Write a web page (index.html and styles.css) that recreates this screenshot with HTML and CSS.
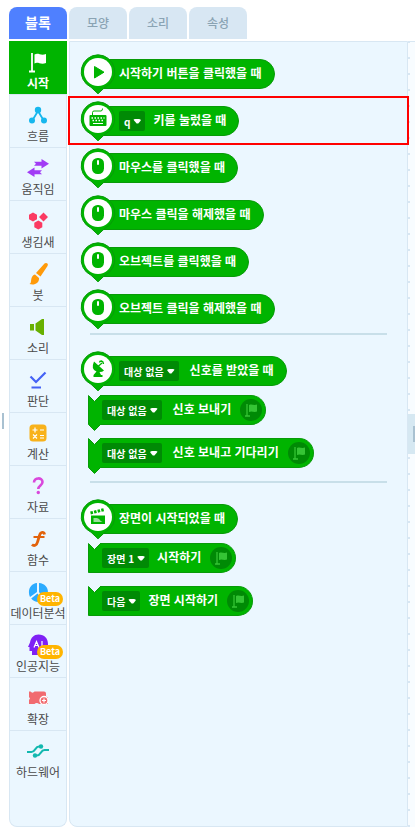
FILE: index.html
```html
<!DOCTYPE html>
<html lang="ko">
<head>
<meta charset="utf-8">
<meta name="viewport" content="width=device-width, initial-scale=1">
<title>블록</title>
<link rel="stylesheet" href="styles.css">
</head>
<body>
<svg class="defs" aria-hidden="true">
  <symbol id="pin" viewBox="0 0 36 42">
    <path d="M18 .8a17 17 0 0 0-7 32.400L18 39.800l7-6.600A17 17 0 0 0 18 .8z" fill="#00b400" stroke="#089b08"/>
    <circle cx="18" cy="18" r="14" fill="#fff"/>
  </symbol>
  <symbol id="mouse" viewBox="0 0 36 42">
    <rect x="12" y="10" width="12" height="16" rx="5.500" fill="#00b400"/>
    <rect x="17" y="12" width="2" height="5" rx="1" fill="#fff"/>
  </symbol>
  <symbol id="flag" viewBox="0 0 22 22">
    <circle cx="11" cy="11" r="11" fill="#008a05"/>
    <path d="M5 17h5M7 17V5" stroke="#35c435" stroke-width="1.300" fill="none"/>
    <path d="M9 6c3-1.500 4.500.8 8-.5v7c-3.500 1.300-5-1.200-8 .5z" fill="#35c435"/>
  </symbol>
  <symbol id="notch" viewBox="0 0 13 36">
    <path d="M.5 30.500V.8L6.500 6.500 12.500.5H13V29.500h-.5L6.500 35.500.5 29.500" fill="#00b400"/>
    <path d="M13 .5h-.5L6.500 6.500.5.500V29.500l6 6 6-6h.5" fill="none" stroke="#089b08"/>
  </symbol>
  <symbol id="notch-end" viewBox="0 0 13 36">
    <path d="M13 .5h-.5L6.500 6.500.5.500V29.500H13" fill="#00b400" stroke="#089b08"/>
  </symbol>
</svg>

<nav class="tabs">
  <button class="tab active" type="button">블록</button>
  <button class="tab" type="button">모양</button>
  <button class="tab" type="button">소리</button>
  <button class="tab" type="button">속성</button>
</nav>

<main class="workspace">
  <nav class="categories">
    <button class="category selected" type="button">
      <svg viewBox="0 0 24 24"><path d="M3 21.500h6M6 21.500V3" stroke="#fff" stroke-width="1.800" fill="none"/><path d="M8.500 4.500c4-2 6 1.500 11.500-.5v9C14.500 15 12 11.500 8.500 13.500z" fill="#fff"/></svg>
      <span>시작</span></button>
    <button class="category" type="button">
      <svg viewBox="0 0 24 24"><path d="M6 18l6-10 6 10" stroke="#16b7ee" stroke-width="1.800" fill="none"/><g fill="#16b7ee"><circle cx="12" cy="7" r="3.200"/><circle cx="6" cy="17.500" r="3"/><circle cx="18" cy="17.500" r="3"/></g></svg>
      <span>흐름</span></button>
    <button class="category" type="button">
      <svg viewBox="0 0 24 24"><path d="M8 5.800h7.500V3L23 7.800l-7.500 4.700v-2.800H8l2-2zM16 18.200H8.500V21L1 16.200l7.500-4.700v2.800H16l-2 2z" fill="#a13cf5"/></svg>
      <span>움직임</span></button>
    <button class="category" type="button">
      <svg viewBox="0 0 24 24"><path d="M7 3.500l4 2.300v4.400l-4 2.300-4-2.300V5.800zM17.500 3.500L22 8l-4.500 4.500L13 8zM12.300 11.500l4 2.300v4.400l-4 2.300-4-2.300v-4.400z" fill="#fb3a62"/></svg>
      <span>생김새</span></button>
    <button class="category" type="button">
      <svg viewBox="0 0 24 24"><path d="M18.500 1.500c1.500-1.500 4.500 0 3 2.500l-7 10.500-4.500-3.500zM9 12.500l4 3.500c.5 5.500-5 7.500-9.500 6 2.200-1 1-4 2.500-7 .7-1.300 1.800-2.200 3-2.500z" fill="#ff9a0a"/></svg>
      <span>붓</span></button>
    <button class="category" type="button">
      <svg viewBox="0 0 24 24"><path d="M4 9h4v6.500H4zM9.500 8.500L16 4h2v16h-2l-6.500-4.500z" fill="#67b000"/></svg>
      <span>소리</span></button>
    <button class="category" type="button">
      <svg viewBox="0 0 24 24"><path d="M4.500 8.500l5.500 5.500L19.500 4.500M5.500 19.500h9.500" stroke="#4562f5" stroke-width="2.200" fill="none"/></svg>
      <span>판단</span></button>
    <button class="category" type="button">
      <svg viewBox="0 0 24 24"><rect x="3.500" y="3.500" width="17" height="17" rx="3.500" fill="#f8b21b"/><path d="M6.500 9h5M9 6.500v5M14 9h4M7 13.500l4 4M11 13.500l-4 4M14 14.500h4M14 17h4" stroke="#fff" stroke-width="1.200"/></svg>
      <span>계산</span></button>
    <button class="category" type="button">
      <svg viewBox="0 0 24 24"><path d="M8 8.500c0-5.500 8.500-5.200 8.500-.5 0 3.500-4.200 3.300-4.200 7" stroke="#d948dc" stroke-width="2.600" fill="none"/><circle cx="12.300" cy="18.500" r="1.700" fill="#d948dc"/></svg>
      <span>자료</span></button>
    <button class="category" type="button">
      <svg viewBox="0 0 24 24"><path d="M18.500 7.500c-.3-3-4-3-5 1L11.500 15c-.8 3.500-3.500 4.500-5.500 2.500" stroke="#e2620b" stroke-width="2.800" fill="none"/><path d="M7.500 10h11" stroke="#e2620b" stroke-width="2"/></svg>
      <span>함수</span></button>
    <button class="category" type="button">
      <svg viewBox="0 0 24 24"><path d="M11 3v9l-7 5C1 10.500 4.500 3.500 11 3zM13 3c9 .5 12 11 5.500 16.500L13 12zM11.500 13.500l5.500 7c-4 2.500-9 1.500-11.800-2z" fill="#2babff"/></svg>
      <span>데이터분석</span><b class="beta">Beta</b></button>
    <button class="category" type="button">
      <svg viewBox="0 0 24 24"><path d="M12.500 1.500c6 0 9.500 4 9.500 9.500v11H6v-4H3.500v-4H2l2-4.500c.8-5 4-8 8.500-8z" fill="#7f21f5"/><path d="M8 14.500l2.500-6 2.500 6M9 12.500h3M16 8v7" stroke="#fff" stroke-width="1.200" fill="none"/></svg>
      <span>인공지능</span><b class="beta">Beta</b></button>
    <button class="category" type="button">
      <svg viewBox="0 0 24 24"><path d="M3 5.500h1.500c1 1.500 3 1.500 4 0H18q2 0 2 2v3l2 1v6.500H13c-1-1.500-3.500-1.500-4.500 0L3 18v-4l1-1.500-1-1.500z" fill="#f16b70"/><circle cx="18" cy="14.500" r="4" fill="#f16b70" stroke="#fff" stroke-width="1.300"/><path d="M16 14.500h4M18 12.500v4" stroke="#fff" stroke-width="1.200"/></svg>
      <span>확장</span></button>
    <button class="category" type="button">
      <svg viewBox="0 0 24 24"><path d="M1 13h4.500c4 0 3.500-5.500 7.500-5.500h3M23 11h-4.500c-4 0-3.500 5.500-7.500 5.500H8" stroke="#12b8af" stroke-width="2.200" fill="none"/><circle cx="15" cy="7.500" r="2.200" fill="#12b8af"/><circle cx="9" cy="16.500" r="2.200" fill="#12b8af"/></svg>
      <span>하드웨어</span></button>
  </nav>

  <section class="palette">
    <ul class="blocks">
      <li class="row"><div class="block hat"><svg class="pin"><use href="#pin"/><path d="M14.500 12.500v11.500l9.500-5.800z" fill="#00b400" stroke="#00b400" stroke-linejoin="round"/></svg><span>시작하기 버튼을 클릭했을 때</span></div></li>
      <li class="row marked"><div class="block hat"><svg class="pin"><use href="#pin"/><rect x="9.500" y="14" width="17" height="11" rx="1" fill="#00b400"/><path d="M12.500 14v-2.500q0-1.500 1.500-1.500h7q1.500 0 1.500-2.500" stroke="#00b400" fill="none"/><path d="M11.500 17h13M12.500 19.500h12" stroke="#fff" stroke-width="1.500" stroke-dasharray="1.500 1.500"/><path d="M13 22.500h10" stroke="#fff"/></svg><button class="field" type="button">q<i></i></button><span>키를 눌렀을 때</span></div></li>
      <li class="row"><div class="block hat"><svg class="pin"><use href="#pin"/><use href="#mouse"/></svg><span>마우스를 클릭했을 때</span></div></li>
      <li class="row"><div class="block hat"><svg class="pin"><use href="#pin"/><use href="#mouse"/></svg><span>마우스 클릭을 해제했을 때</span></div></li>
      <li class="row"><div class="block hat"><svg class="pin"><use href="#pin"/><use href="#mouse"/></svg><span>오브젝트를 클릭했을 때</span></div></li>
      <li class="row"><div class="block hat"><svg class="pin"><use href="#pin"/><use href="#mouse"/></svg><span>오브젝트 클릭을 해제했을 때</span></div></li>
    </ul>
    <hr>
    <ul class="blocks">
      <li class="row"><div class="block hat"><svg class="pin"><use href="#pin"/><path d="M14 10.500q-3.500 8 2.500 10L13.500 24v2h9v-2h-1.500l-1.500-3q3 0 4.500-1.500z" fill="#00b400"/><path d="M18 15.500l4-3.500M19.500 11.500q0-1.500 2-1.500 2 .5 2 3" stroke="#00b400" stroke-width="1.300" fill="none"/></svg><button class="field" type="button">대상 없음<i></i></button><span class="spaced">신호를 받았을 때</span></div></li>
      <li class="row stack"><div class="block"><svg class="cap"><use href="#notch"/></svg><button class="field" type="button">대상 없음<i></i></button><span class="spaced">신호 보내기</span><svg class="flag"><use href="#flag"/></svg></div></li>
      <li class="row stack"><div class="block"><svg class="cap"><use href="#notch"/></svg><button class="field" type="button">대상 없음<i></i></button><span class="spaced">신호 보내고 기다리기</span><svg class="flag"><use href="#flag"/></svg></div></li>
    </ul>
    <hr>
    <ul class="blocks">
      <li class="row"><div class="block hat"><svg class="pin"><use href="#pin"/><path d="M11 16.500h14v8.500H11z" fill="#00b400"/><path d="M10.500 14l14-3.500" stroke="#00b400" stroke-width="3" stroke-dasharray="2.500 1.200"/><path d="M13.500 19v4h9q-2-1-3-2.500t-3-1.500z" fill="#9be09b"/></svg><span>장면이 시작되었을 때</span></div></li>
      <li class="row stack"><div class="block"><svg class="cap"><use href="#notch-end"/></svg><button class="field" type="button">장면 1<i></i></button><span>시작하기</span><svg class="flag"><use href="#flag"/></svg></div></li>
      <li class="row stack"><div class="block"><svg class="cap"><use href="#notch-end"/></svg><button class="field" type="button">다음<i></i></button><span>장면 시작하기</span><svg class="flag"><use href="#flag"/></svg></div></li>
    </ul>
  </section>
  <div class="board"><div class="handle"></div></div>
</main>
<div class="side-grip"></div>
</body>
</html>
```

FILE: styles.css
```css
* { box-sizing: border-box; }

body {
  position: relative;
  display: flex;
  flex-direction: column;
  min-height: 100vh;
  margin: 0;
  padding: 7px 0 4px 9px;
  background: #fff;
  font-family: "Noto Sans CJK KR", sans-serif;
  font-size: 12px;
}

.defs { position: absolute; width: 0; height: 0; }

button {
  margin: 0;
  padding: 0;
  border: 0;
  font: inherit;
  color: inherit;
  cursor: pointer;
}

.tabs { display: flex; gap: 2px; height: 32px; margin-bottom: 2px; }

.tab {
  width: 58px;
  padding-bottom: 2px;
  border-radius: 8px 8px 0 0;
  background: #d8e7f3;
  color: #8aa3b3;
  font-weight: 500;
}

.tab.active {
  background: #4f80ff;
  color: #fff;
  font-size: 14px;
  font-weight: 700;
}

.workspace { display: flex; flex: 1; }

.categories {
  flex: none;
  width: 58px;
  margin-right: 2px;
  border: 1px solid #d8e7f3;
  border-top: 0;
  border-radius: 0 0 8px 8px;
  background: #ebf7ff;
}

.category {
  position: relative;
  display: flex;
  flex-direction: column;
  align-items: center;
  width: 100%;
  height: 53px;
  padding-top: 8px;
  border-top: 1px solid #d8e7f3;
  background: none;
  color: #4a4a4a;
  line-height: 18px;
  white-space: nowrap;
}

.category:last-child { border-radius: 0 0 6px 6px; }

.category svg { flex: none; width: 24px; height: 24px; }

.category.selected {
  width: 58px;
  margin-left: -1px;
  border-color: #00b400;
  background: #00b400;
  color: #fff;
  font-weight: 700;
}

.beta {
  position: absolute;
  top: 20px;
  right: 3px;
  width: 26px;
  border-radius: 7px;
  background: #ffb400;
  color: #fff;
  font-size: 9px;
  line-height: 14px;
}

.palette {
  flex: 1;
  padding-top: 8px;
  border: 1px solid #d8e7f3;
  border-radius: 0 0 0 8px;
  background: #ebf7ff;
}

.blocks { margin: 0; padding: 0; list-style: none; }

.row { height: 47px; margin: 0 -1px; padding: 9px 0 0 19px; }
.row.stack { height: 43px; padding-top: 1px; }

.row.marked {
  position: relative;
  z-index: 1;
  outline: 2px solid #ff0000;
  outline-offset: -1px;
}

.block {
  position: relative;
  display: inline-flex;
  align-items: center;
  height: 30px;
  padding: 0 12px 0 30px;
  border: 1px solid #089b08;
  border-radius: 15px;
  background: #00b400;
  color: #fff;
  font-weight: 700;
  white-space: nowrap;
  vertical-align: top;
}

.block span { padding-bottom: 3px; }

.stack .block {
  padding: 0 3px 0 2px;
  margin-left: 12px;
  border-left: 0;
  border-radius: 0 15px 15px 0;
}

.pin { position: absolute; top: -6px; left: -9px; width: 36px; height: 42px; }
.cap { position: absolute; top: -1px; left: -12px; width: 13px; height: 36px; }
.flag { width: 22px; height: 22px; margin-left: 9px; }

.field {
  display: flex;
  align-items: center;
  gap: 3px;
  height: 20px;
  margin-right: 8px;
  padding: 0 4px 0 5px;
  border-radius: 2px;
  background: #008a05;
  font-size: 10px;
}

.field i {
  width: 8px;
  height: 5px;
  border-radius: 2px;
  background: #fff;
  clip-path: polygon(0 0, 100% 0, 100% 25%, 60% 100%, 40% 100%, 0 25%);
}

.spaced { margin-left: 3px; }

hr {
  height: 2px;
  margin: 1px 20px 12px;
  border: 0;
  background: #c8dfe9;
}

.board {
  position: relative;
  flex: none;
  width: 7px;
  border-top: 1px solid #d8e7f3;
  background: #f8fcff radial-gradient(circle at 1px 1px, #d8e7f3 1px, transparent 1px) 0 15px / 16px 16px;
}

.handle {
  position: absolute;
  top: 372px;
  right: 0;
  width: 7px;
  height: 40px;
  background: linear-gradient(#a9c1d1, #a9c1d1) right center / 2px 16px no-repeat #d6e8f2;
}

.side-grip {
  position: absolute;
  top: 413px;
  left: 2px;
  width: 2px;
  height: 16px;
  background: #a9c1d1;
}
```
